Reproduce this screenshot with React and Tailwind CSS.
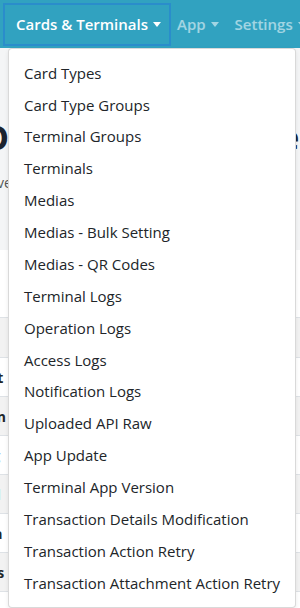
import { useState } from "react";

const ITEMS = [
  "Card Types",
  "Card Type Groups",
  "Terminal Groups",
  "Terminals",
  "Medias",
  "Medias - Bulk Setting",
  "Medias - QR Codes",
  "Terminal Logs",
  "Operation Logs",
  "Access Logs",
  "Notification Logs",
  "Uploaded API Raw",
  "App Update",
  "Terminal App Version",
  "Transaction Details Modification",
  "Transaction Action Retry",
  "Transaction Attachment Action Retry",
];

const ROWS = ["Settlement", "Transaction", "Config", "Terminal", "Data", "Status", "EXT Batch"];

function Caret({ className = "" }) {
  return (
    <span
      className={`inline-block w-0 h-0 ml-[5px] align-middle border-l-[4px] border-r-[4px] border-t-[5px] border-l-transparent border-r-transparent ${className}`}
    />
  );
}

export default function App() {
  const [open] = useState(true);

  return (
    <div className="relative w-[300px] h-[608px] overflow-hidden bg-white font-['Open_Sans',sans-serif]">
      {/* Navbar */}
      <nav className="h-[48px] bg-[#31a2c0] flex items-center px-[3px] whitespace-nowrap">
        <button className="h-[43px] pl-[11px] pr-[8px] flex items-center border-2 border-[#2a8dcb] text-white text-[15px] font-semibold">
          Cards &amp; Terminals
          <Caret className="border-t-white" />
        </button>
        <button className="h-[43px] pl-[6px] pr-[16px] flex items-center text-white/55 text-[15px] font-semibold">
          App
          <Caret className="border-t-white/55" />
        </button>
        <button className="h-[43px] flex items-center text-white/55 text-[15px] font-semibold">
          Settings
          <Caret className="border-t-white/55" />
        </button>
      </nav>

      {/* Page behind */}
      <div className="bg-[#f4f5f6] h-[202px] pt-[72px] -ml-[18px] whitespace-nowrap">
        <h1 className="text-[34px] font-bold text-[#1c2430] leading-none">Oo Dashboard Overview of the</h1>
        <p className="mt-[18px] ml-[4px] text-[14px] text-[#555]">Overview of cards and terminals</p>
      </div>
      <div className="mt-[67px] -ml-[12px] w-[330px] text-[14px] font-bold text-[#212529]">
        <div className="h-[41px] bg-[#f2f2f2] border-y border-[#dee2e6] flex items-center justify-end pr-[28px] text-[#c06a1f]">
          Name
        </div>
        {ROWS.map((r, i) => (
          <div
            key={r}
            className={`h-[39px] border-b border-[#dee2e6] flex items-center justify-between pr-[28px] ${i % 2 ? "bg-[#f2f2f2]" : "bg-white"}`}
          >
            <span>{r.slice(-2)}</span>
            <span className="font-normal">:</span>
          </div>
        ))}
      </div>

      {/* Dropdown menu */}
      {open && (
        <div className="absolute left-[8px] top-[48px] w-[288px] py-[8px] bg-white border border-black/15 rounded-[4px] shadow-[0_2px_4px_rgba(0,0,0,0.08)]">
          {ITEMS.map((it) => (
            <div
              key={it}
              className="h-[31.875px] flex items-center px-[15px] text-[15px] text-[#212529] whitespace-nowrap"
            >
              {it}
            </div>
          ))}
        </div>
      )}
    </div>
  );
}
